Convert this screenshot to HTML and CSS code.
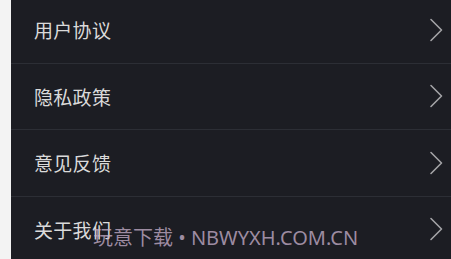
FILE: index.html
```html
<!DOCTYPE html>
<html lang="zh-CN">
<head>
<meta charset="utf-8">
<link rel="stylesheet" href="styles.css">
</head>
<body>
<div class="page">
  <div class="edge"></div>
  <ul class="menu">
    <li class="row first"><span class="label">用户协议</span><svg class="chev" viewBox="0 0 14 24"><polyline points="2,1.5 12.5,12 2,22.5"/></svg></li>
    <li class="row"><span class="label">隐私政策</span><svg class="chev" viewBox="0 0 14 24"><polyline points="2,1.5 12.5,12 2,22.5"/></svg></li>
    <li class="row"><span class="label">意见反馈</span><svg class="chev" viewBox="0 0 14 24"><polyline points="2,1.5 12.5,12 2,22.5"/></svg></li>
    <li class="row"><span class="label">关于我们</span><svg class="chev" viewBox="0 0 14 24"><polyline points="2,1.5 12.5,12 2,22.5"/></svg></li>
  </ul>
  <div class="watermark">玩意下载 • NBWYXH.COM.CN</div>
</div>
</body>
</html>
```

FILE: styles.css
```css
html, body {
  margin: 0;
  padding: 0;
  background: #1c1d23;
  overflow: hidden;
}
.page {
  position: relative;
  display: flex;
  width: 451px;
  height: 259px;
  overflow: hidden;
  font-family: "Noto Sans CJK SC", "Noto Sans", sans-serif;
}
.edge {
  width: 11px;
  flex: 0 0 11px;
  background: #f3f3f3;
}
.menu {
  flex: 1;
  list-style: none;
  margin: -3px 0 0 0;
  padding: 0;
  background: #1c1d23;
}
.row {
  display: flex;
  align-items: center;
  justify-content: space-between;
  height: 65.5px;
  padding: 0 9px 0 23px;
  border-bottom: 1px solid #2c2e35;
}
.label {
  color: #dadada;
  font-size: 19px;
  letter-spacing: 0.3px;
  line-height: 1;
}
.chev {
  width: 14px;
  height: 24px;
  margin-right: -1px;
}
.chev polyline {
  fill: none;
  stroke: #a3a3a6;
  stroke-width: 1.6;
  stroke-linecap: round;
  stroke-linejoin: round;
}
.watermark {
  position: absolute;
  left: 93px;
  top: 225px;
  font-family: "Noto Sans", "Noto Sans CJK SC", sans-serif;
  font-size: 20px;
  line-height: 26px;
  color: rgba(200, 178, 205, 0.75);
  white-space: nowrap;
}
```
